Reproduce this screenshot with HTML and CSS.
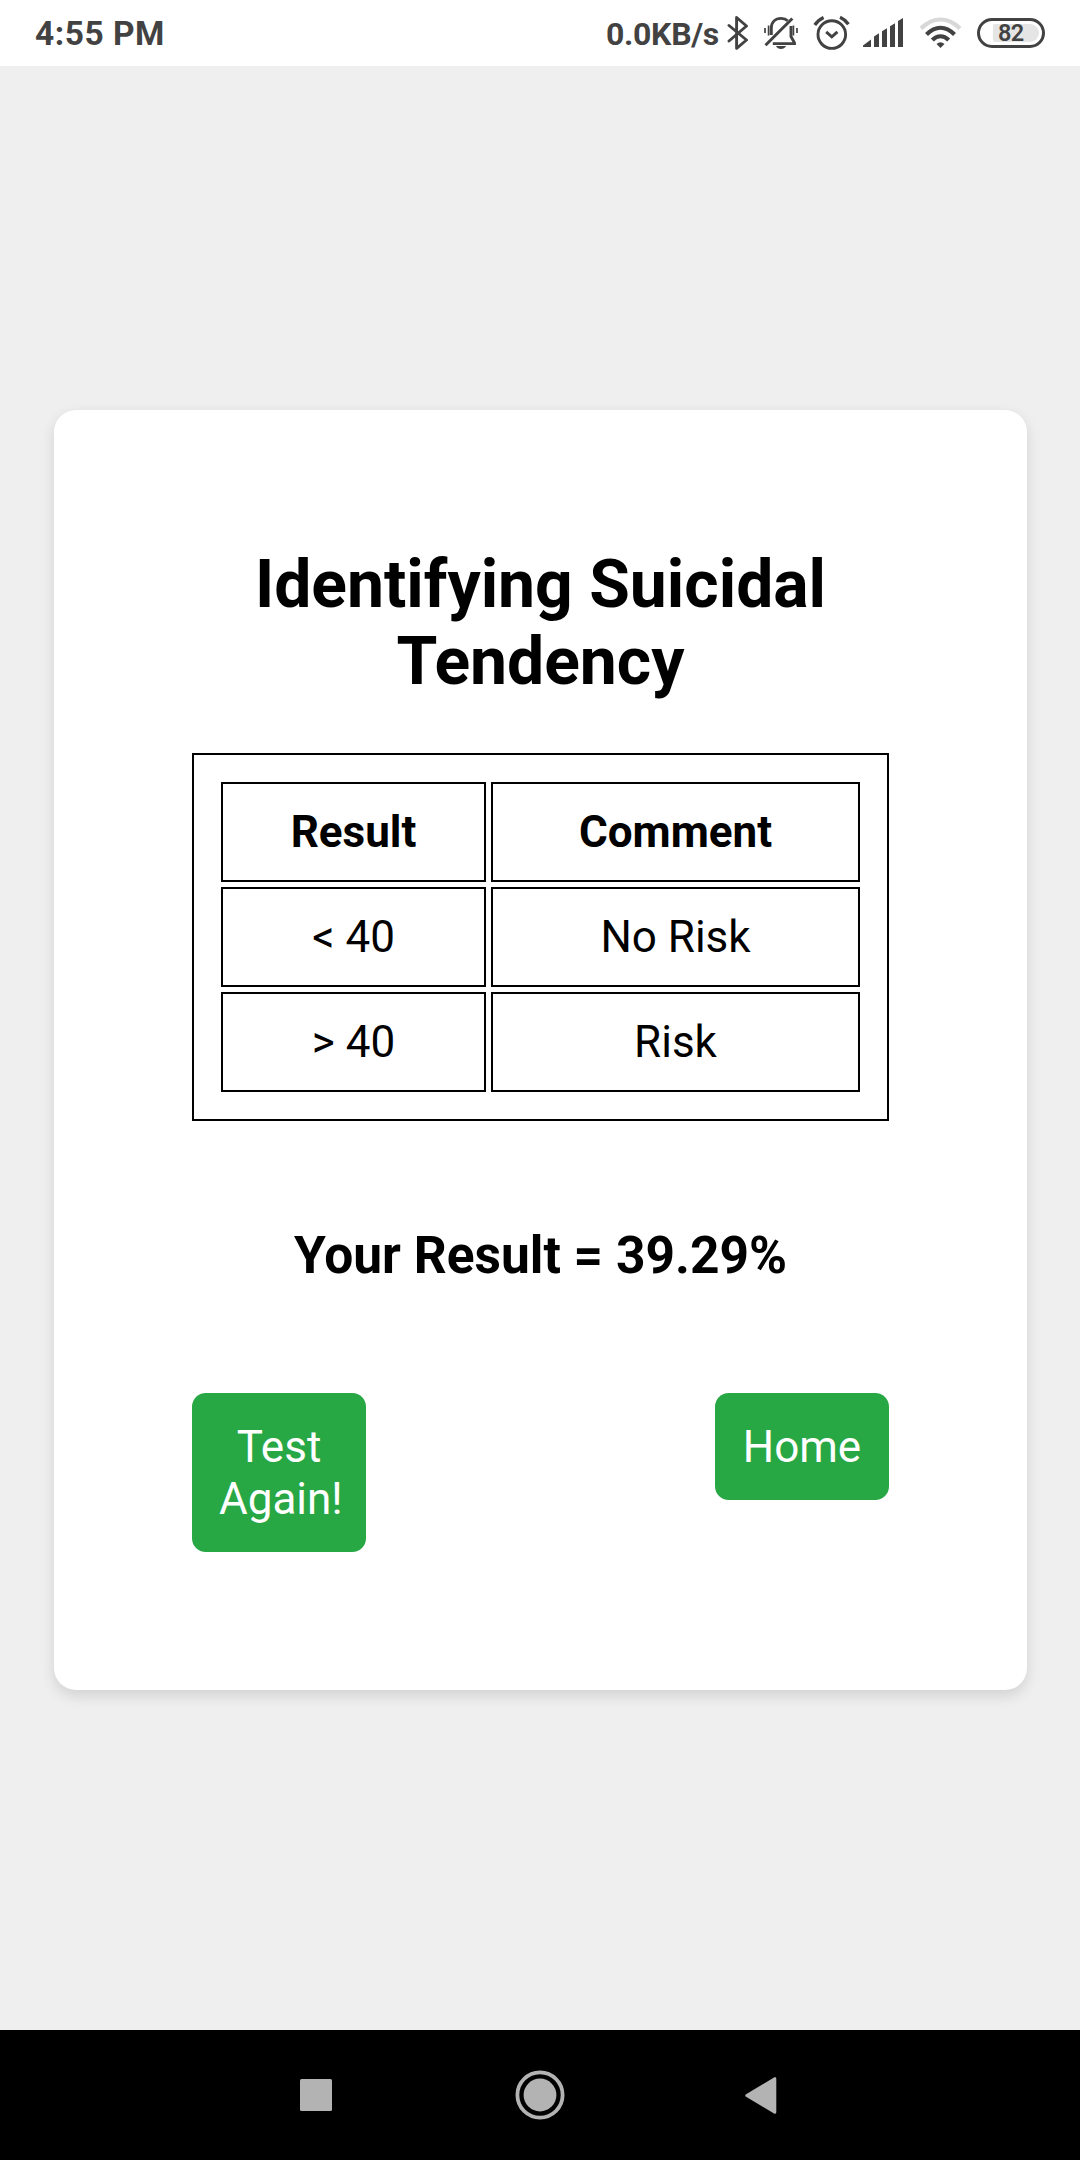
FILE: index.html
```html
<!DOCTYPE html>
<html lang="en">
<head>
<meta charset="utf-8">
<meta name="viewport" content="width=device-width, initial-scale=1">
<title>Identifying Suicidal Tendency</title>
<link rel="stylesheet" href="styles.css">
</head>
<body>
<header class="status">
  <span class="clock">4:55 PM</span>
  <div class="indicators">
    <span class="speed">0.0KB/s</span>
    <svg class="bluetooth" width="22" height="36" viewBox="727 15 22 36" fill="none" stroke="#424242" stroke-width="2.9" stroke-linejoin="round" stroke-linecap="round"><path d="M729 25.5 746.5 40 736.6 48.3V17.5L746.5 26 729 41"/></svg>
    <svg class="bell" width="36" height="36" viewBox="763 15 36 36" fill="none" stroke="#424242" stroke-width="2.9"><path d="M771.3 35V28.5C771.3 22 775.5 18.4 781 18.4 783.8 18.4 786 19.2 787.7 20.8M791 26V36.5L794.5 42.8V43.6H772.8"/><path d="M765.5 45.2 792.3 18.5" stroke-width="3"/><path d="M765 28V33M768.6 25.5V35.5M793.4 25.5V35.5M797 28V33" stroke-width="1.7"/><path d="M775.8 46H786.2C785 48 783.2 49 781 49S777 48 775.8 46Z" fill="#424242" stroke="none"/></svg>
    <svg class="alarm" width="37" height="36" viewBox="813 15 37 36" fill="none" stroke="#424242" stroke-width="2.9"><circle cx="831.8" cy="34.6" r="13.8"/><path d="M826.2 31.8 831.8 36.8 837.4 31.8"/><path d="M814.8 25Q818.3 19.8 823.6 17.4M848.4 24.2Q845.2 19.6 840 17.3" stroke-width="3.3"/></svg>
    <svg class="signal" width="41" height="30" viewBox="863 18 41 30" fill="#424242"><path d="M863 45.5 871 39.6V47H863ZM874 36.5 879 33.3V47H874ZM882 31.2 887 28.2V47H882ZM890 26.2 895 23.2V47H890ZM898 21 903 18V47H898Z"/></svg>
    <svg class="wifi" width="43" height="32" viewBox="918.5 17 43 32" fill="none" stroke="#424242" stroke-width="4.2"><path d="M920.5 28.4C933 16.7 947 16.7 959.5 28.4" stroke="#d8d8d8"/><path d="M926 34.4C935 25.5 945 25.5 954 34.4"/><path d="M931.8 40.1C937 35 943 35 948.2 40.1"/><path d="M936 44Q940 40.3 944 44L940 48Z" fill="#424242" stroke="none"/></svg>
    <span class="battery"><span class="charge">82</span></span>
  </div>
</header>
<main class="page">
  <section class="card">
    <h1 class="title">Identifying Suicidal Tendency</h1>
    <table class="scale">
      <colgroup><col class="col-result"><col class="col-comment"></colgroup>
      <tr><th>Result</th><th>Comment</th></tr>
      <tr><td>&lt; 40</td><td>No Risk</td></tr>
      <tr><td>&gt; 40</td><td>Risk</td></tr>
    </table>
    <h3 class="result">Your Result = 39.29%</h3>
    <div class="actions">
      <a class="button">Test Again!</a>
      <a class="button">Home</a>
    </div>
  </section>
</main>
<nav class="navbar">
  <svg class="recents" width="32" height="32" viewBox="0 0 32 32" fill="#b3b3b3"><rect width="32" height="32" rx="1.5"/></svg>
  <svg class="home" width="50" height="50" viewBox="0 0 50 50" fill="none" stroke="#b3b3b3"><circle cx="25" cy="25" r="22.6" stroke-width="3.8"/><circle cx="25" cy="25" r="16.4" fill="#b3b3b3" stroke="none"/></svg>
  <svg class="back" width="32" height="38" viewBox="0 0 32 38" fill="#b3b3b3" stroke="#b3b3b3" stroke-width="3" stroke-linejoin="round"><path d="M1.8 19.5 29.8 2.7V36.3Z"/></svg>
</nav>
</body>
</html>
```
FILE: styles.css
```css
* {
  box-sizing: border-box;
}

body {
  margin: 0;
  height: 2160px;
  display: flex;
  flex-direction: column;
  background: #efefef;
  color: #000;
  font-family: Roboto, sans-serif;
  font-size: 44px;
  line-height: 52px;
}

/* Status bar */
.status {
  height: 66px;
  padding: 0 35px;
  display: flex;
  align-items: center;
  justify-content: space-between;
  background: #fff;
  color: #424242;
}

.status svg {
  display: block;
  flex: none;
}

.clock {
  font-size: 33.5px;
  font-weight: 700;
  letter-spacing: 0.5px;
  padding-top: 2px;
}

.indicators {
  display: flex;
  align-items: center;
}

.speed {
  font-size: 32px;
  font-weight: 700;
  letter-spacing: -0.3px;
  padding-top: 1px;
  margin-right: 8px;
}

.bluetooth { margin-right: 14px; }
.bell { margin-right: 14px; }
.alarm { margin-right: 13px; }
.signal { margin-right: 14.5px; }
.wifi { margin-right: 15.5px; }

.battery {
  width: 68px;
  height: 30px;
  padding: 3px;
  border: 3px solid #424242;
  border-radius: 15px;
}

.charge {
  display: block;
  width: 46px;
  height: 18px;
  margin-left: 10px;
  padding-left: 5px;
  border-radius: 2px 9px 9px 2px;
  background: #e5e5e5;
  font-size: 23.5px;
  font-weight: 600;
  letter-spacing: -0.6px;
  line-height: 19px;
}

/* Page */
.page {
  flex: 1;
  padding: 344px 53px 0 54px;
}

.card {
  height: 1280px;
  padding: 136px 138px 0;
  border-radius: 22px;
  background: #fff;
  box-shadow: 0 5.5px 14px rgba(0, 0, 0, 0.12);
  text-align: center;
}

.title {
  margin: 0 0 53px;
  font-size: 66px;
  font-weight: 700;
  line-height: 77px;
}

.scale {
  width: 697px;
  padding: 22px;
  border: 2px solid #000;
  border-spacing: 5px;
  table-layout: fixed;
}

.col-result { width: 265px; }
.col-comment { width: 369px; }

.scale th,
.scale td {
  height: 100px;
  padding: 0;
  border: 2px solid #000;
}

.result {
  margin: 105px 0 107px;
  font-size: 51.48px;
  font-weight: 700;
  line-height: 60px;
}

.actions {
  display: flex;
  align-items: flex-start;
  justify-content: space-between;
}

.button {
  width: 174px;
  padding: 27.5px 27px;
  border-radius: 13.75px;
  background: #28a745;
  color: #fff;
}

/* Navigation bar */
.navbar {
  height: 130px;
  padding-left: 300px;
  display: flex;
  align-items: center;
  background: #000;
}

.home {
  margin: 0 180px 0 183px;
}
```
